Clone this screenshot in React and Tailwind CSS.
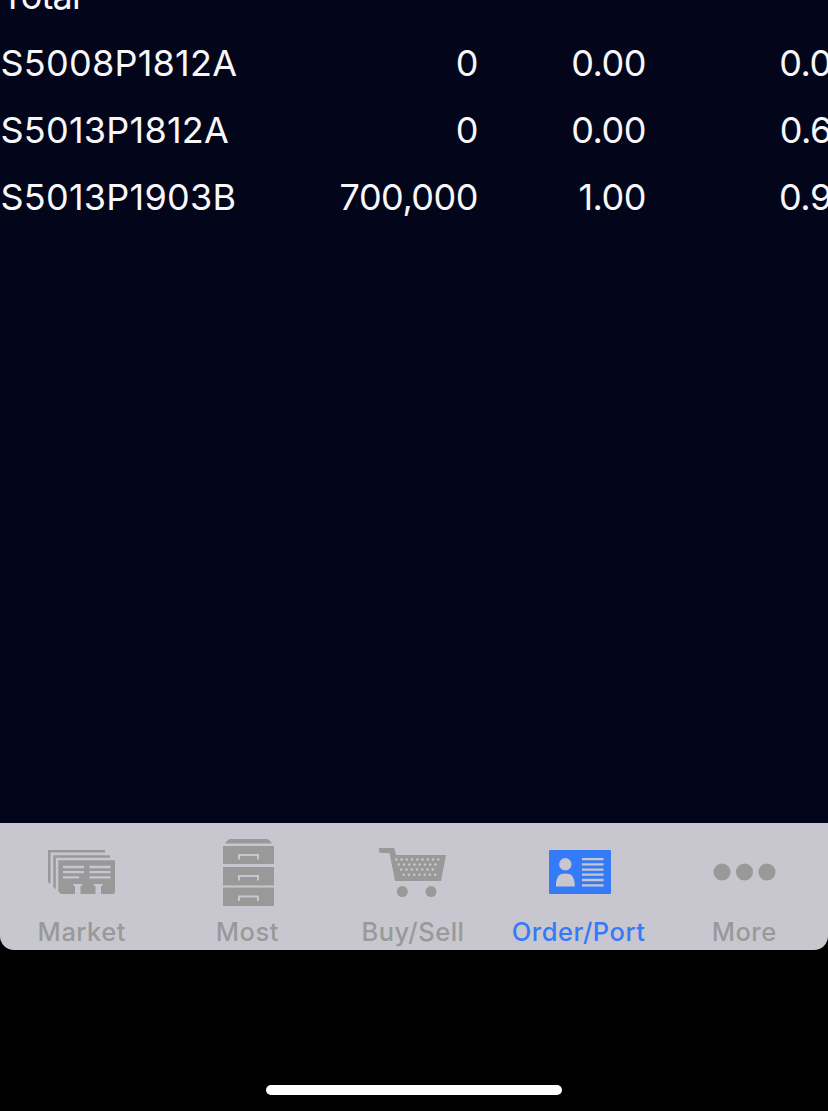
import React from 'react';

const rows = [
    { name: 'Total', volume: '', avg: '', last: '' },
    { name: 'S5008P1812A', volume: '0', avg: '0.00', last: '0.00' },
    { name: 'S5013P1812A', volume: '0', avg: '0.00', last: '0.60' },
    { name: 'S5013P1903B', volume: '700,000', avg: '1.00', last: '0.90' },
];

const MarketIcon = () => (
    <svg width="68" height="46" viewBox="0 0 68 46" fill="currentColor">
        <path d="M0 0H57V2.5H2.5V34L0 32Z" />
        <path d="M5.300 5.300H62V7.800H7.800V39.500L5.300 37Z" />
        <path d="M10.300 10.300H67V42.500L65.500 44H53V36H54.500V34H46V36H47.500V44H32.500V36H34V34H25.500V36H27V44H13L10.300 41.500Z" />
        <path
            d="M15 17H36M15 22.200H36M15 27.400H31M41.500 17H62.500M41.500 22.200H62.500M41.500 27.400H62.500"
            fill="none"
            stroke="#c8c7cf"
            strokeWidth="2.300"
        />
    </svg>
);

const DrawersIcon = () => (
    <svg width="52" height="68" viewBox="0 0 52 68" fill="currentColor">
        <path d="M7 0H44Q46 0 49 4.500H2Q5 0 7 0Z" />
        {[7, 28, 48.5].map(y => (
            <g key={y}>
                <rect x="0" y={y} width="51" height={y === 7 ? 18 : 18.5} />
                <path d={`M16 ${y + 13.5}V${y + 9}H35V${y + 13.5}`} fill="none" stroke="#c8c7cf" strokeWidth="2" />
            </g>
        ))}
    </svg>
);

const CartIcon = () => (
    <svg width="68" height="50" viewBox="0 0 68 50" fill="currentColor">
        <path d="M0 0H14Q15.500 0 15.800 1.500L17 7H67L62 33H16L10.500 5H2Q0 5 0 3Z" />
        {/* Basket holes */}
        {[
            { y: 11.5, x: 17.3, n: 9 },
            { y: 16.5, x: 19.7, n: 8 },
            { y: 21.5, x: 22.2, n: 7 },
            { y: 26.7, x: 24.7, n: 7 },
        ].map(line =>
            Array.from({ length: line.n }, (_, i) => (
                <circle key={`${line.y}-${i}`} cx={line.x + i * 5.25} cy={line.y} r="1.25" fill="#c8c7cf" />
            ))
        )}
        <circle cx="23.300" cy="43.600" r="5.500" />
        <circle cx="52" cy="43.600" r="5.500" />
    </svg>
);

const CardIcon = () => (
    <svg width="62" height="44" viewBox="0 0 62 44" fill="currentColor">
        <rect width="62" height="44" rx="1" />
        <g fill="#c8c7cf">
            <circle cx="16.300" cy="14.300" r="6.200" />
            <path d="M7 36.500V33Q8 26 12 24Q16.300 22.800 20.500 24Q24.800 26 25.700 33V36.500Z" />
        </g>
        <path
            d="M33 9.200H54.500M33 14.400H54.500M33 19.600H54.500M33 24.700H54.500M33 30H54.500M33 35.300H54.500"
            stroke="#c8c7cf"
            strokeWidth="2.300"
        />
    </svg>
);

const MoreIcon = () => (
    <svg width="64" height="18" viewBox="0 0 64 18" fill="currentColor">
        <circle cx="9" cy="9" r="8.600" />
        <circle cx="31.500" cy="9" r="8.600" />
        <circle cx="54" cy="9" r="8.600" />
    </svg>
);

const tabs = [
    { label: 'Market', icon: MarketIcon, iconClass: 'pt-[27px] pr-[2px]' },
    { label: 'Most', icon: DrawersIcon, iconClass: 'pt-4 pl-px' },
    { label: 'Buy/Sell', icon: CartIcon, iconClass: 'pt-[25px] pr-[2px]' },
    { label: 'Order/Port', icon: CardIcon, iconClass: 'pt-[27px]', active: true },
    { label: 'More', icon: MoreIcon, iconClass: 'pt-10 pr-px' },
];

const PortfolioTable = () => (
    <div className="h-[823px] overflow-hidden bg-[#03051a]">
        <div className="-mt-[38px] w-[860px] text-4xl text-[#f7f7f9]">
            {rows.map(row => (
                <div
                    key={row.name}
                    className="grid h-[67.25px] grid-cols-[240px_238px_168px_208px] items-center tracking-[-0.5px]"
                >
                    <span className={row.name === 'Total' ? 'ml-px tracking-[-0.8px]' : 'ml-[0.5px] tracking-[0.25px]'}>
                        {row.name}
                    </span>
                    <span className="text-right">{row.volume}</span>
                    <span className="text-right">{row.avg}</span>
                    <span className="text-right">{row.last}</span>
                </div>
            ))}
        </div>
    </div>
);

const TabBar = () => (
    <nav className="grid h-[127px] grid-cols-5 rounded-b-[14px] bg-[#c8c7cf]">
        {tabs.map(({ label, icon: Icon, iconClass, active }) => (
            <div
                key={label}
                className={`flex flex-col items-center ${active ? 'text-[#357af6]' : 'text-[#999999]'}`}
            >
                <div className={`flex h-[93px] items-start ${iconClass}`}>
                    <Icon />
                </div>
                <span className="pr-[2px] text-[25.5px] leading-8 font-medium tracking-[0.5px]">{label}</span>
            </div>
        ))}
    </nav>
);

export default function App() {
    return (
        <div className="h-[1111px] w-[828px] overflow-hidden bg-black font-['Inter',sans-serif]">
            <PortfolioTable />
            <TabBar />
            <div className="mx-auto mt-[135px] h-[10px] w-[296px] rounded-full bg-white" />
        </div>
    );
}
